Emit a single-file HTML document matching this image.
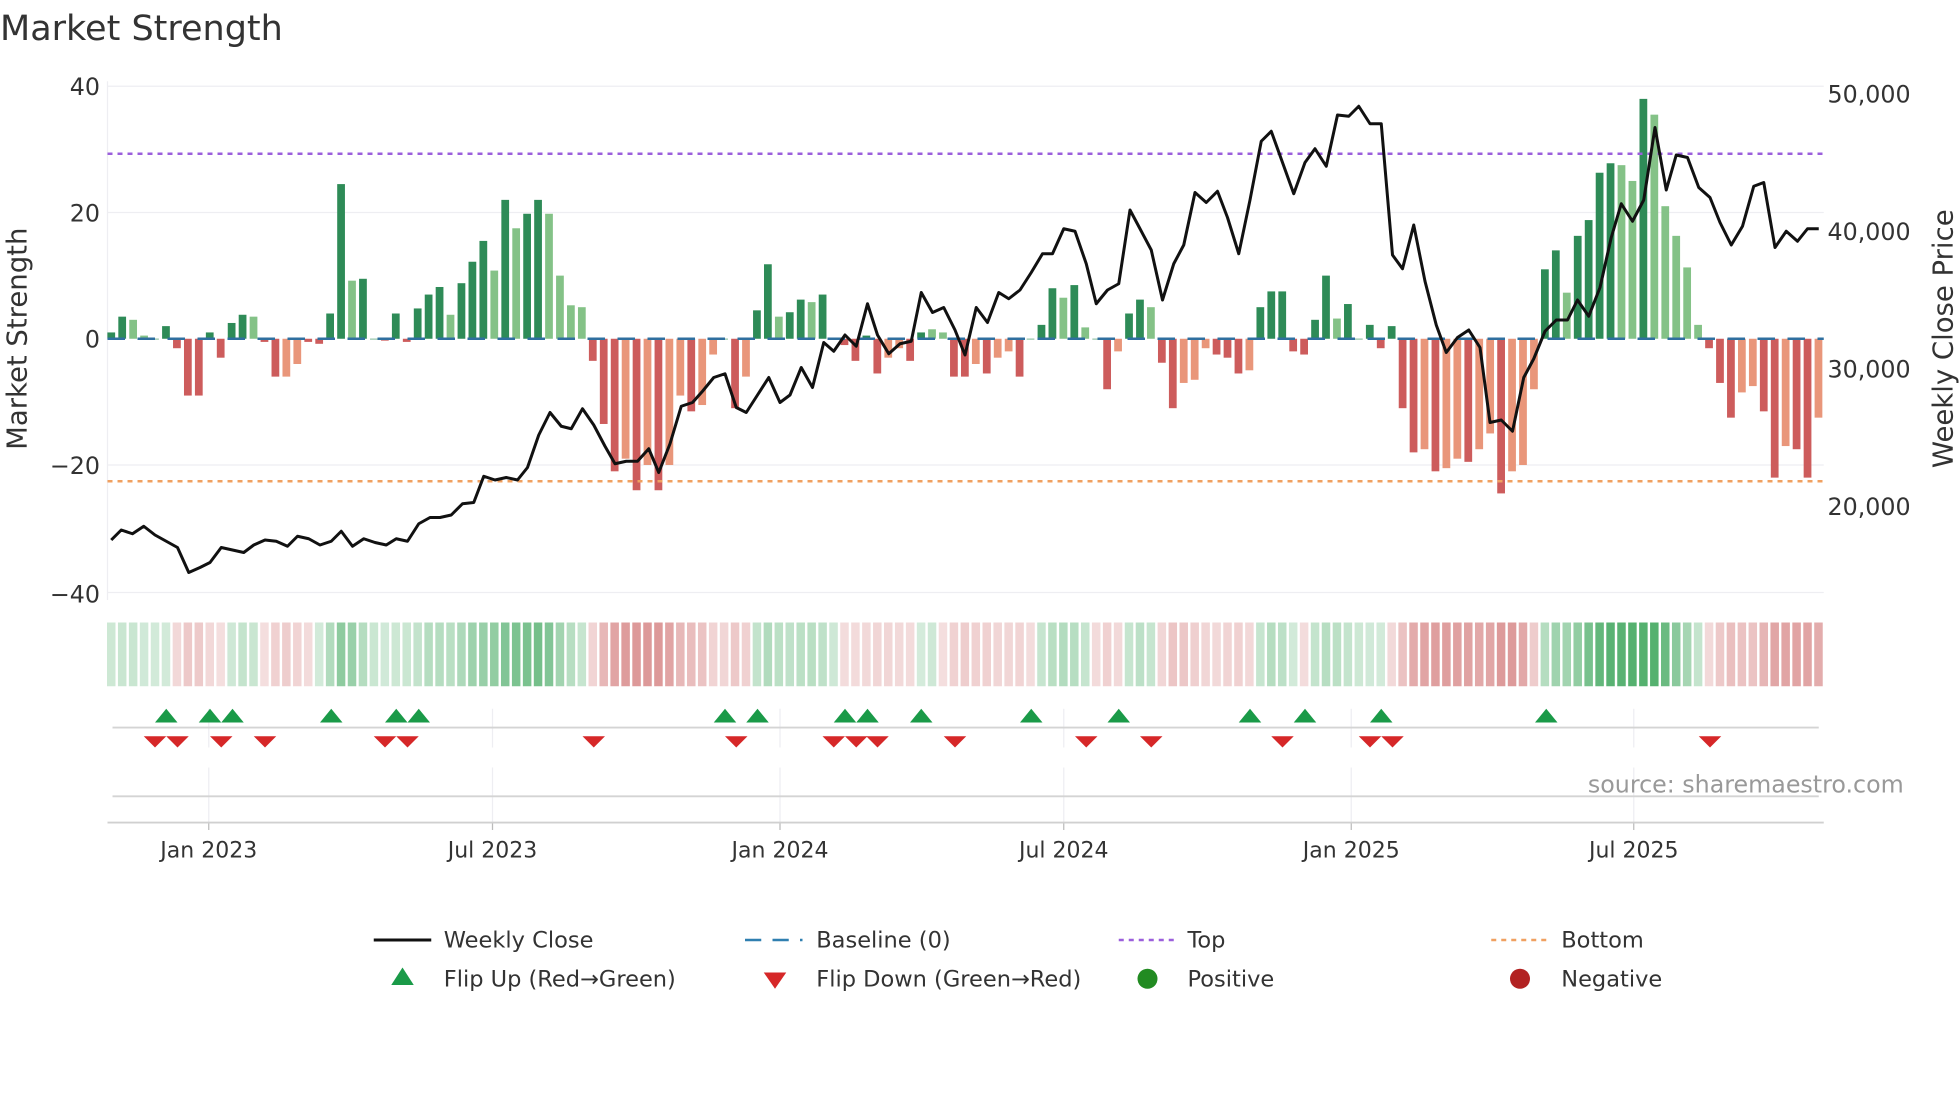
<!DOCTYPE html>
<html><head><meta charset="utf-8">
<style>
html,body{margin:0;padding:0;background:#fff;}
svg{display:block;font-family:"DejaVu Sans","Liberation Sans",sans-serif;}
</style></head>
<body>
<svg id="c" width="1960" height="1102" viewBox="0 0 1568 881.6" xmlns="http://www.w3.org/2000/svg">
<text x="0" y="32" font-size="28" fill="#333">Market Strength</text>
<g id="grid"></g>
<g id="heat"></g>
<g id="bars"></g>
<line x1="86" y1="271" x2="1459" y2="271" stroke="#2f6f9f" stroke-width="2" stroke-dasharray="14,10"/>
<line x1="86" y1="123" x2="1459" y2="123" stroke="#9b5fdc" stroke-width="2" stroke-dasharray="4,4"/>
<line x1="86" y1="385" x2="1459" y2="385" stroke="#f0a060" stroke-width="2" stroke-dasharray="4,4"/>
<polyline id="price" fill="none" stroke="#111" stroke-width="2.4" stroke-linejoin="round"/>
<g id="marks"></g>
<g font-size="19" fill="#333">
<text x="80" y="76" text-anchor="end">40</text>
<text x="80" y="177" text-anchor="end">20</text>
<text x="80" y="278" text-anchor="end">0</text>
<text x="80" y="379" text-anchor="end">−20</text>
<text x="80" y="482" text-anchor="end">−40</text>
<text x="1462" y="82">50,000</text>
<text x="1462" y="192">40,000</text>
<text x="1462" y="302">30,000</text>
<text x="1462" y="412">20,000</text>
</g>
<text transform="translate(21,271) rotate(-90)" text-anchor="middle" font-size="22" fill="#333">Market Strength</text>
<text transform="translate(1562,271) rotate(-90)" text-anchor="middle" font-size="22" fill="#333">Weekly Close Price</text>
<g font-size="17.6" fill="#333" text-anchor="middle">
<text x="167" y="686">Jan 2023</text>
<text x="394" y="686">Jul 2023</text>
<text x="624" y="686">Jan 2024</text>
<text x="851" y="686">Jul 2024</text>
<text x="1081" y="686">Jan 2025</text>
<text x="1307" y="686">Jul 2025</text>
</g>
<text x="1523" y="634" text-anchor="end" font-size="19" fill="#999">source: sharemaestro.com</text>
<g font-size="18" fill="#333">
<line x1="299" y1="752" x2="345" y2="752" stroke="#111" stroke-width="2.4"/>
<text x="355" y="758">Weekly Close</text>
<line x1="596" y1="752" x2="642" y2="752" stroke="#2f7fb0" stroke-width="2" stroke-dasharray="13,9"/>
<text x="653" y="758">Baseline (0)</text>
<line x1="895" y1="752" x2="941" y2="752" stroke="#9b5fdc" stroke-width="2" stroke-dasharray="4,4"/>
<text x="950" y="758">Top</text>
<line x1="1193" y1="752" x2="1239" y2="752" stroke="#f0a060" stroke-width="2" stroke-dasharray="4,4"/>
<text x="1249" y="758">Bottom</text>
<polygon points="313,788 331,788 322,774" fill="#1a9a48"/>
<text x="355" y="789">Flip Up (Red→Green)</text>
<polygon points="611,778 629,778 620,791" fill="#d62728"/>
<text x="653" y="789">Flip Down (Green→Red)</text>
<circle cx="918" cy="783" r="8" fill="#228b22"/>
<text x="950" y="789">Positive</text>
<circle cx="1216" cy="783" r="8" fill="#b22222"/>
<text x="1249" y="789">Negative</text>
</g>
</svg>
<script>
var NS="http://www.w3.org/2000/svg";
function el(p,t,a){var e=document.createElementNS(NS,t);for(var k in a)e.setAttribute(k,a[k]);p.appendChild(e);return e;}
var V=[1,3.5,-3,-0.5,0,2,-1.5,-9,-9,1,-3,2.5,3.8,-3.5,-0.5,-6,-6,-4,-0.5,-0.8,4,24.5,-9.2,9.5,0,-0.3,4,-0.5,4.8,7,8.2,-3.8,8.8,12.2,15.5,-10.8,22,-17.5,19.8,22,-19.8,-10,-5.3,-5,-3.5,-13.5,-21,-19,-24,-20,-24,-20,-9,-11.5,-10.5,-2.5,0,-11,-6,4.5,11.8,-3.5,4.2,6.2,-5.8,7,0,-1,-3.5,0.5,-5.5,-3,-1.5,-3.5,1,-1.5,-1,-6,-6,-4,-5.5,-3,-2,-6,0,2.2,8,-6.5,8.5,-1.8,0,-8,-2,4,6.2,-5,-3.8,-11,-7,-6.5,-1.5,-2.5,-3,-5.5,-5,5,7.5,7.5,-2,-2.5,3,10,-3.2,5.5,0,2.2,-1.5,2,-11,-18,-17.5,-21,-20.5,-19,-19.5,-17.5,-15,-24.5,-21,-20,-8,11,14,-7.3,16.3,18.8,26.3,27.8,-27.5,-25,38,-35.5,-21,-16.3,-11.3,-2.2,-1.5,-7,-12.5,-8.5,-7.5,-11.5,-22,-17,-17.5,-22,-12.5];
var light={2:1,3:1,13:1,16:1,17:1,22:1,31:1,35:1,37:1,40:1,41:1,42:1,43:1,47:1,49:1,51:1,52:1,54:1,55:1,58:1,61:1,64:1,71:1,72:1,75:1,76:1,79:1,81:1,82:1,87:1,89:1,92:1,95:1,98:1,99:1,100:1,104:1,112:1,120:1,122:1,123:1,125:1,126:1,128:1,129:1,130:1,133:1,138:1,139:1,141:1,142:1,143:1,144:1,145:1,149:1,150:1,153:1,156:1};
var pos={2:1,3:1,13:1,22:1,31:1,35:1,37:1,40:1,41:1,42:1,43:1,61:1,64:1,75:1,76:1,87:1,89:1,95:1,112:1,133:1,138:1,139:1,141:1,142:1,143:1,144:1,145:1};
for(var i=0;i<V.length;i++){if(pos[i])V[i]=Math.abs(V[i]);}
var bars=document.getElementById('bars'),heat=document.getElementById('heat'),grid=document.getElementById('grid');
var x0=89,dx=8.755,u=5.05;
[69,170,372,474].forEach(function(y){el(grid,'line',{x1:86,y1:y,x2:1459,y2:y,stroke:'#eeeef2','stroke-width':1});});
el(grid,'line',{x1:86,y1:65,x2:86,y2:480,stroke:'#eeeef2','stroke-width':1});
[167,394,624,851,1081,1307].forEach(function(x){
 el(grid,'line',{x1:x,y1:567,x2:x,y2:598,stroke:'#eeeef2','stroke-width':1});
 el(grid,'line',{x1:x,y1:614,x2:x,y2:658,stroke:'#eeeef2','stroke-width':1});
 el(grid,'line',{x1:x,y1:658,x2:x,y2:664,stroke:'#bbb','stroke-width':1});
});
el(grid,'line',{x1:90,y1:582,x2:1455,y2:582,stroke:'#d4d4d4','stroke-width':1.5});
el(grid,'line',{x1:90,y1:637,x2:1455,y2:637,stroke:'#d4d4d4','stroke-width':1.5});
el(grid,'line',{x1:86,y1:658,x2:1459,y2:658,stroke:'#d0d0d0','stroke-width':1.5});
for(var i=0;i<V.length;i++){
 var v=V[i],cx=x0+dx*i,w=6.2,c;
 if(v>=0)c=light[i]?'#84c287':'#2e8b57';else c=light[i]?'#e9967a':'#cd5c5c';
 var h=Math.abs(v)*u;
 el(bars,'rect',{x:cx-w/2,y:v>=0?271-h:271,width:w,height:Math.max(h,0.5),fill:c});
 var s=0,n=0;for(var j=i-1;j<=i+1;j++){if(j>=0&&j<V.length){s+=V[j]*(j==i?2:1);n+=(j==i?2:1);}}s/=n;
 var a=0.22+Math.min(Math.abs(s),28)/28*0.65;
 var hc=s>=0?'rgba(60,165,90,'+a.toFixed(2)+')':'rgba(200,90,90,'+(a*0.85).toFixed(2)+')';
 el(heat,'rect',{x:cx-3.4,y:498,width:6.8,height:51,fill:hc});
}
var P="89,432 97,424 106,427 115,421 124,428 133,433 142,438 151,458 160,454 168,450 177,438 186,440 195,442 203,436 212,432 221,433 230,437 238,429 247,431 256,436 265,433 273,425 282,437 291,431 300,434 309,436 317,431 326,433 335,419 344,414 352,414 361,412 370,403 379,402 387,381 396,384 405,382 414,384 422,374 431,348 440,330 449,341 457,343 466,327 475,340 484,357 492,371 501,369 510,369 519,359 527,378 536,355 545,325 554,322 562,313 571,302 580,299 589,326 597,330 606,316 615,302 624,322 632,316 641,294 650,310 659,274 667,281 676,268 685,277 694,243 702,268 711,283 720,275 729,273 737,234 746,250 755,246 764,264 772,284 781,246 790,258 799,234 807,239 816,232 825,218 834,203 842,203 851,183 860,185 869,211 877,243 886,232 895,227 904,168 912,183 921,200 930,240 939,211 947,196 956,154 965,162 974,153 982,174 991,203 1000,160 1009,113 1017,105 1026,130 1035,155 1044,130 1052,119 1061,133 1070,92 1079,93 1087,85 1096,99 1105,99 1114,204 1122,215 1131,180 1140,225 1149,260 1157,282 1166,270 1175,264 1184,278 1192,338 1201,336 1210,345 1219,302 1227,287 1236,265 1245,256 1254,256 1262,240 1271,253 1280,230 1289,190 1297,163 1306,177 1315,160 1324,102 1333,152 1341,124 1350,126 1359,150 1368,158 1376,178 1385,196 1394,181 1403,149 1411,146 1420,198 1429,185 1438,193 1446,183 1455,183";
document.getElementById('price').setAttribute('points',P);
var m=document.getElementById('marks');
[133,168,186,265,317,335,580,606,676,694,737,825,895,1000,1044,1105,1237].forEach(function(x){
 el(m,'polygon',{points:(x-9)+',578 '+(x+9)+',578 '+x+',567',fill:'#1a9a48'});});
[124,142,177,212,308,326,475,589,667,685,702,764,869,921,1026,1096,1114,1368].forEach(function(x){
 el(m,'polygon',{points:(x-9)+',589 '+(x+9)+',589 '+x+',598',fill:'#d62728'});});
</script>
</body></html>
